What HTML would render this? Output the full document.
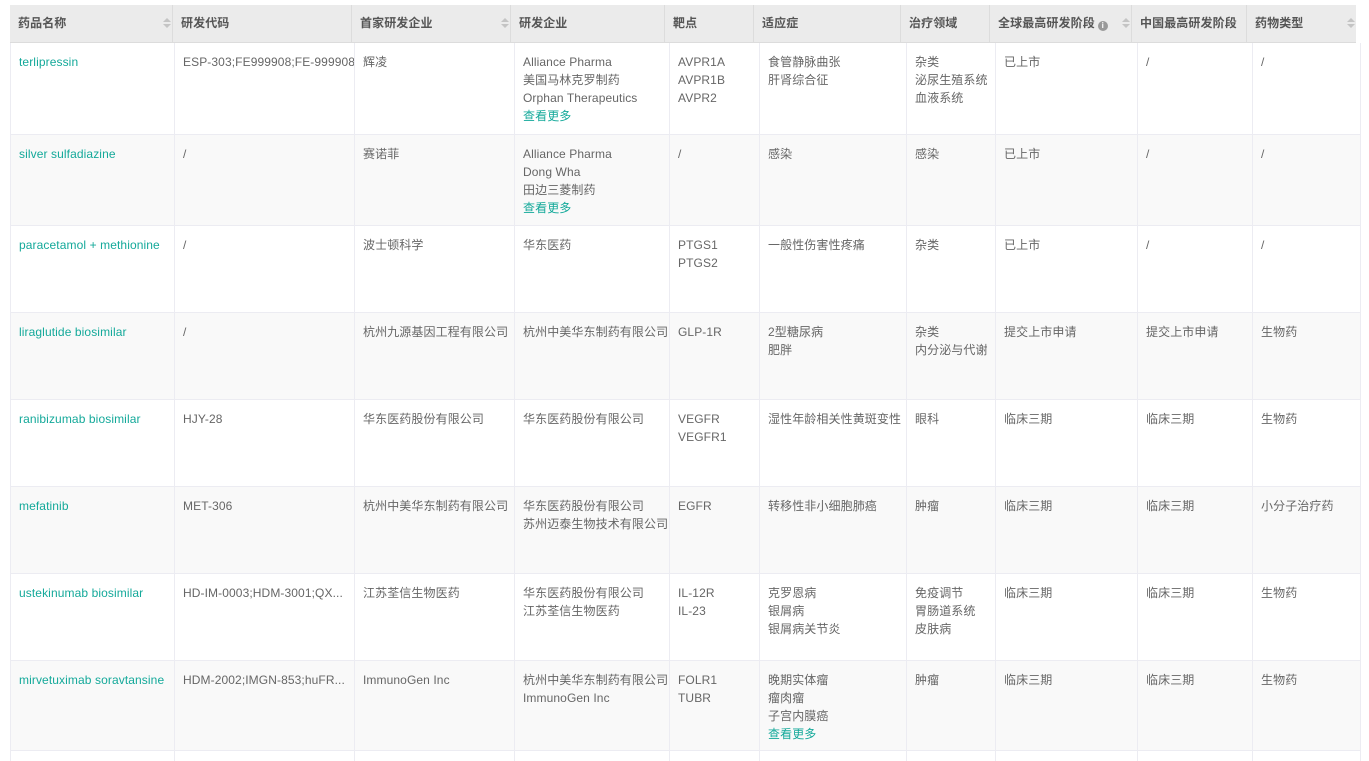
<!DOCTYPE html>
<html><head><meta charset="utf-8"><style>
html,body{margin:0;width:1369px;height:758px;overflow:hidden}
body{background:#fff;font-family:"Liberation Sans","Noto Sans CJK SC",sans-serif;font-size:12px;color:#666;letter-spacing:.1px}
.h{position:absolute;left:10px;top:5px;width:1346px;height:38px;background:#ebebeb;border-bottom:1px solid #dcdcdc;box-sizing:border-box}
.h div{position:absolute;top:0;height:37px;line-height:37px;padding-left:8px;box-sizing:border-box;border-right:1px solid #dcdcdc;color:#555;font-weight:bold}
.s{position:absolute;right:9px;top:13px;width:0;height:0}
.s:before{content:"";position:absolute;left:0;top:0;border:4px solid transparent;border-bottom:4px solid #c4c4c4;border-top:0}
.s:after{content:"";position:absolute;left:0;top:6px;border:4px solid transparent;border-top:4px solid #c4c4c4;border-bottom:0}
table{position:absolute;left:10px;top:43px;border-collapse:collapse;table-layout:fixed;width:1350px}
td{border:1px solid #ececf2;border-top:0;vertical-align:top;padding:10px 8px 0 8px;line-height:18px;box-sizing:border-box;white-space:nowrap;overflow:hidden}
tr:nth-child(even) td{background:#f9f9f9}
a{color:#14a99a;text-decoration:none}
.i{display:inline-block;width:10px;height:10px;border-radius:50%;background:#999;color:#fff;font-size:8px;line-height:10px;text-align:center;vertical-align:-1px;margin-left:3px}
</style></head><body>
<div class="h">
<div style="left:0;width:163px">药品名称<span class="s"></span></div>
<div style="left:163px;width:179px">研发代码</div>
<div style="left:342px;width:159px">首家研发企业<span class="s"></span></div>
<div style="left:501px;width:154px">研发企业</div>
<div style="left:655px;width:89px">靶点</div>
<div style="left:744px;width:147px">适应症</div>
<div style="left:891px;width:89px">治疗领域</div>
<div style="left:980px;width:142px">全球最高研发阶段<span class="i">i</span><span class="s"></span></div>
<div style="left:1122px;width:115px">中国最高研发阶段</div>
<div style="left:1237px;width:109px;border-right:0">药物类型<span class="s"></span></div>
</div>
<table>
<colgroup><col style="width:164px"><col style="width:180px"><col style="width:160px"><col style="width:155px"><col style="width:90px"><col style="width:147px"><col style="width:89px"><col style="width:142px"><col style="width:115px"><col style="width:108px"></colgroup>
<tr style="height:91px"><td><a>terlipressin</a></td><td>ESP-303;FE999908;FE-999908</td><td>辉凌</td><td>Alliance Pharma<br>美国马林克罗制药<br>Orphan Therapeutics<br><a>查看更多</a></td><td>AVPR1A<br>AVPR1B<br>AVPR2</td><td>食管静脉曲张<br>肝肾综合征</td><td>杂类<br>泌尿生殖系统<br>血液系统</td><td>已上市</td><td>/</td><td>/</td></tr>
<tr style="height:91px"><td><a>silver sulfadiazine</a></td><td>/</td><td>赛诺菲</td><td>Alliance Pharma<br>Dong Wha<br>田边三菱制药<br><a>查看更多</a></td><td>/</td><td>感染</td><td>感染</td><td>已上市</td><td>/</td><td>/</td></tr>
<tr style="height:87px"><td><a>paracetamol + methionine</a></td><td>/</td><td>波士顿科学</td><td>华东医药</td><td>PTGS1<br>PTGS2</td><td>一般性伤害性疼痛</td><td>杂类</td><td>已上市</td><td>/</td><td>/</td></tr>
<tr style="height:87px"><td><a>liraglutide biosimilar</a></td><td>/</td><td>杭州九源基因工程有限公司</td><td>杭州中美华东制药有限公司</td><td>GLP-1R</td><td>2型糖尿病<br>肥胖</td><td>杂类<br>内分泌与代谢</td><td>提交上市申请</td><td>提交上市申请</td><td>生物药</td></tr>
<tr style="height:87px"><td><a>ranibizumab biosimilar</a></td><td>HJY-28</td><td>华东医药股份有限公司</td><td>华东医药股份有限公司</td><td>VEGFR<br>VEGFR1</td><td>湿性年龄相关性黄斑变性</td><td>眼科</td><td>临床三期</td><td>临床三期</td><td>生物药</td></tr>
<tr style="height:87px"><td><a>mefatinib</a></td><td>MET-306</td><td>杭州中美华东制药有限公司</td><td>华东医药股份有限公司<br>苏州迈泰生物技术有限公司</td><td>EGFR</td><td>转移性非小细胞肺癌</td><td>肿瘤</td><td>临床三期</td><td>临床三期</td><td>小分子治疗药</td></tr>
<tr style="height:87px"><td><a>ustekinumab biosimilar</a></td><td>HD-IM-0003;HDM-3001;QX...</td><td>江苏荃信生物医药</td><td>华东医药股份有限公司<br>江苏荃信生物医药</td><td>IL-12R<br>IL-23</td><td>克罗恩病<br>银屑病<br>银屑病关节炎</td><td>免疫调节<br>胃肠道系统<br>皮肤病</td><td>临床三期</td><td>临床三期</td><td>生物药</td></tr>
<tr style="height:90px"><td><a>mirvetuximab soravtansine</a></td><td>HDM-2002;IMGN-853;huFR...</td><td>ImmunoGen Inc</td><td>杭州中美华东制药有限公司<br>ImmunoGen Inc</td><td>FOLR1<br>TUBR</td><td>晚期实体瘤<br>瘤肉瘤<br>子宫内膜癌<br><a>查看更多</a></td><td>肿瘤</td><td>临床三期</td><td>临床三期</td><td>生物药</td></tr>
<tr style="height:8px"><td style="border-bottom:0"></td><td style="border-bottom:0"></td><td style="border-bottom:0"></td><td style="border-bottom:0"></td><td style="border-bottom:0"></td><td style="border-bottom:0"></td><td style="border-bottom:0"></td><td style="border-bottom:0"></td><td style="border-bottom:0"></td><td style="border-bottom:0"></td></tr>
</table>
</body></html>
